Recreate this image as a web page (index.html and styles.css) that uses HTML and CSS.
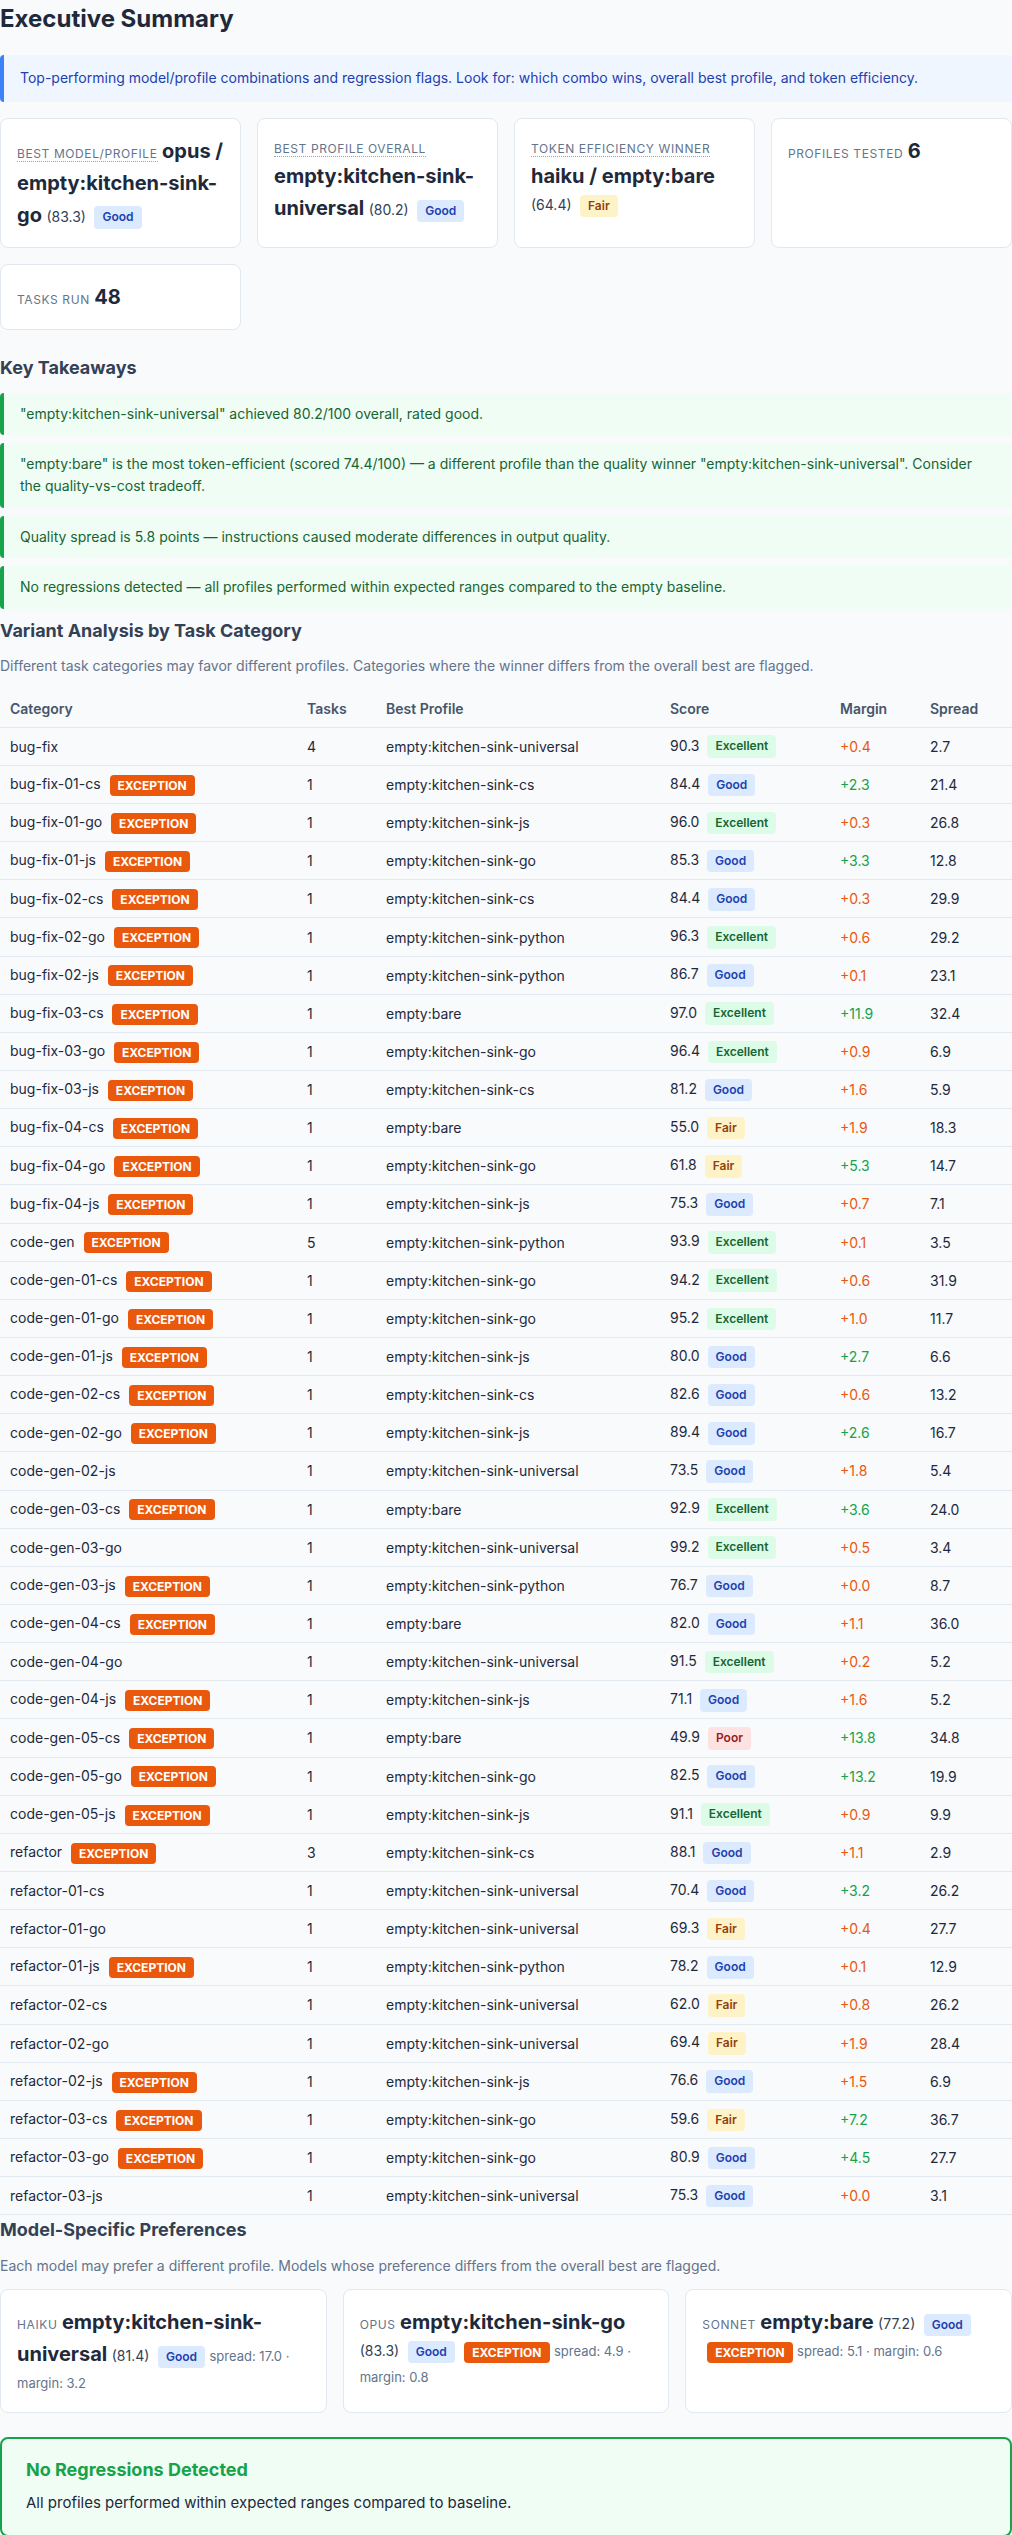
FILE: index.html
```html
<!DOCTYPE html>
<html lang="en">
<head>
<meta charset="utf-8">
<title>Executive Summary</title>
<link rel="stylesheet" href="styles.css">
</head>
<body>
<main class="page">
  <h2 class="page-title">Executive Summary</h2>
  <div class="callout">Top-performing model/profile combinations and regression flags. Look for: which combo wins, overall best profile, and token efficiency.</div>

  <div class="stat-grid">
    <div class="stat-card"><span class="stat-label tip">Best model/profile</span> <span class="stat-value">opus / empty:kitchen-sink-go</span> <span class="stat-score">(83.3)</span> <span class="badge good">Good</span></div>
    <div class="stat-card"><span class="stat-label tip">Best profile overall</span> <span class="stat-value">empty:kitchen-sink-universal</span> <span class="stat-score">(80.2)</span> <span class="badge good">Good</span></div>
    <div class="stat-card"><span class="stat-label tip">Token efficiency winner</span> <span class="stat-value">haiku / empty:bare</span> <span class="stat-score">(64.4)</span> <span class="badge fair">Fair</span></div>
    <div class="stat-card"><span class="stat-label">Profiles tested</span> <span class="stat-value">6</span></div>
    <div class="stat-card"><span class="stat-label">Tasks run</span> <span class="stat-value">48</span></div>
  </div>

  <h3 class="section-title">Key Takeaways</h3>
  <ul class="takeaways">
    <li>"empty:kitchen-sink-universal" achieved 80.2/100 overall, rated good.</li>
    <li>"empty:bare" is the most token-efficient (scored 74.4/100) — a different profile than the quality winner "empty:kitchen-sink-universal". Consider the quality-vs-cost tradeoff.</li>
    <li>Quality spread is 5.8 points — instructions caused moderate differences in output quality.</li>
    <li>No regressions detected — all profiles performed within expected ranges compared to the empty baseline.</li>
  </ul>

  <h3 class="section-title">Variant Analysis by Task Category</h3>
  <p class="section-desc">Different task categories may favor different profiles. Categories where the winner differs from the overall best are flagged.</p>

  <table class="variant-table">
    <colgroup>
      <col class="c-cat"><col class="c-tasks"><col class="c-prof"><col class="c-score"><col class="c-margin"><col class="c-spread">
    </colgroup>
    <thead>
      <tr><th>Category</th><th>Tasks</th><th>Best Profile</th><th>Score</th><th>Margin</th><th>Spread</th></tr>
    </thead>
    <tbody>
      <tr><td>bug-fix</td><td>4</td><td>empty:kitchen-sink-universal</td><td>90.3 <span class="badge excellent">Excellent</span></td><td class="m-low">+0.4</td><td>2.7</td></tr>
      <tr><td>bug-fix-01-cs <span class="badge exc">EXCEPTION</span></td><td>1</td><td>empty:kitchen-sink-cs</td><td>84.4 <span class="badge good">Good</span></td><td class="m-high">+2.3</td><td>21.4</td></tr>
      <tr><td>bug-fix-01-go <span class="badge exc">EXCEPTION</span></td><td>1</td><td>empty:kitchen-sink-js</td><td>96.0 <span class="badge excellent">Excellent</span></td><td class="m-low">+0.3</td><td>26.8</td></tr>
      <tr><td>bug-fix-01-js <span class="badge exc">EXCEPTION</span></td><td>1</td><td>empty:kitchen-sink-go</td><td>85.3 <span class="badge good">Good</span></td><td class="m-high">+3.3</td><td>12.8</td></tr>
      <tr><td>bug-fix-02-cs <span class="badge exc">EXCEPTION</span></td><td>1</td><td>empty:kitchen-sink-cs</td><td>84.4 <span class="badge good">Good</span></td><td class="m-low">+0.3</td><td>29.9</td></tr>
      <tr><td>bug-fix-02-go <span class="badge exc">EXCEPTION</span></td><td>1</td><td>empty:kitchen-sink-python</td><td>96.3 <span class="badge excellent">Excellent</span></td><td class="m-low">+0.6</td><td>29.2</td></tr>
      <tr><td>bug-fix-02-js <span class="badge exc">EXCEPTION</span></td><td>1</td><td>empty:kitchen-sink-python</td><td>86.7 <span class="badge good">Good</span></td><td class="m-low">+0.1</td><td>23.1</td></tr>
      <tr><td>bug-fix-03-cs <span class="badge exc">EXCEPTION</span></td><td>1</td><td>empty:bare</td><td>97.0 <span class="badge excellent">Excellent</span></td><td class="m-high">+11.9</td><td>32.4</td></tr>
      <tr><td>bug-fix-03-go <span class="badge exc">EXCEPTION</span></td><td>1</td><td>empty:kitchen-sink-go</td><td>96.4 <span class="badge excellent">Excellent</span></td><td class="m-low">+0.9</td><td>6.9</td></tr>
      <tr><td>bug-fix-03-js <span class="badge exc">EXCEPTION</span></td><td>1</td><td>empty:kitchen-sink-cs</td><td>81.2 <span class="badge good">Good</span></td><td class="m-low">+1.6</td><td>5.9</td></tr>
      <tr><td>bug-fix-04-cs <span class="badge exc">EXCEPTION</span></td><td>1</td><td>empty:bare</td><td>55.0 <span class="badge fair">Fair</span></td><td class="m-low">+1.9</td><td>18.3</td></tr>
      <tr><td>bug-fix-04-go <span class="badge exc">EXCEPTION</span></td><td>1</td><td>empty:kitchen-sink-go</td><td>61.8 <span class="badge fair">Fair</span></td><td class="m-high">+5.3</td><td>14.7</td></tr>
      <tr><td>bug-fix-04-js <span class="badge exc">EXCEPTION</span></td><td>1</td><td>empty:kitchen-sink-js</td><td>75.3 <span class="badge good">Good</span></td><td class="m-low">+0.7</td><td>7.1</td></tr>
      <tr><td>code-gen <span class="badge exc">EXCEPTION</span></td><td>5</td><td>empty:kitchen-sink-python</td><td>93.9 <span class="badge excellent">Excellent</span></td><td class="m-low">+0.1</td><td>3.5</td></tr>
      <tr><td>code-gen-01-cs <span class="badge exc">EXCEPTION</span></td><td>1</td><td>empty:kitchen-sink-go</td><td>94.2 <span class="badge excellent">Excellent</span></td><td class="m-low">+0.6</td><td>31.9</td></tr>
      <tr><td>code-gen-01-go <span class="badge exc">EXCEPTION</span></td><td>1</td><td>empty:kitchen-sink-go</td><td>95.2 <span class="badge excellent">Excellent</span></td><td class="m-low">+1.0</td><td>11.7</td></tr>
      <tr><td>code-gen-01-js <span class="badge exc">EXCEPTION</span></td><td>1</td><td>empty:kitchen-sink-js</td><td>80.0 <span class="badge good">Good</span></td><td class="m-high">+2.7</td><td>6.6</td></tr>
      <tr><td>code-gen-02-cs <span class="badge exc">EXCEPTION</span></td><td>1</td><td>empty:kitchen-sink-cs</td><td>82.6 <span class="badge good">Good</span></td><td class="m-low">+0.6</td><td>13.2</td></tr>
      <tr><td>code-gen-02-go <span class="badge exc">EXCEPTION</span></td><td>1</td><td>empty:kitchen-sink-js</td><td>89.4 <span class="badge good">Good</span></td><td class="m-high">+2.6</td><td>16.7</td></tr>
      <tr><td>code-gen-02-js</td><td>1</td><td>empty:kitchen-sink-universal</td><td>73.5 <span class="badge good">Good</span></td><td class="m-low">+1.8</td><td>5.4</td></tr>
      <tr><td>code-gen-03-cs <span class="badge exc">EXCEPTION</span></td><td>1</td><td>empty:bare</td><td>92.9 <span class="badge excellent">Excellent</span></td><td class="m-high">+3.6</td><td>24.0</td></tr>
      <tr><td>code-gen-03-go</td><td>1</td><td>empty:kitchen-sink-universal</td><td>99.2 <span class="badge excellent">Excellent</span></td><td class="m-low">+0.5</td><td>3.4</td></tr>
      <tr><td>code-gen-03-js <span class="badge exc">EXCEPTION</span></td><td>1</td><td>empty:kitchen-sink-python</td><td>76.7 <span class="badge good">Good</span></td><td class="m-low">+0.0</td><td>8.7</td></tr>
      <tr><td>code-gen-04-cs <span class="badge exc">EXCEPTION</span></td><td>1</td><td>empty:bare</td><td>82.0 <span class="badge good">Good</span></td><td class="m-low">+1.1</td><td>36.0</td></tr>
      <tr><td>code-gen-04-go</td><td>1</td><td>empty:kitchen-sink-universal</td><td>91.5 <span class="badge excellent">Excellent</span></td><td class="m-low">+0.2</td><td>5.2</td></tr>
      <tr><td>code-gen-04-js <span class="badge exc">EXCEPTION</span></td><td>1</td><td>empty:kitchen-sink-js</td><td>71.1 <span class="badge good">Good</span></td><td class="m-low">+1.6</td><td>5.2</td></tr>
      <tr><td>code-gen-05-cs <span class="badge exc">EXCEPTION</span></td><td>1</td><td>empty:bare</td><td>49.9 <span class="badge poor">Poor</span></td><td class="m-high">+13.8</td><td>34.8</td></tr>
      <tr><td>code-gen-05-go <span class="badge exc">EXCEPTION</span></td><td>1</td><td>empty:kitchen-sink-go</td><td>82.5 <span class="badge good">Good</span></td><td class="m-high">+13.2</td><td>19.9</td></tr>
      <tr><td>code-gen-05-js <span class="badge exc">EXCEPTION</span></td><td>1</td><td>empty:kitchen-sink-js</td><td>91.1 <span class="badge excellent">Excellent</span></td><td class="m-low">+0.9</td><td>9.9</td></tr>
      <tr><td>refactor <span class="badge exc">EXCEPTION</span></td><td>3</td><td>empty:kitchen-sink-cs</td><td>88.1 <span class="badge good">Good</span></td><td class="m-low">+1.1</td><td>2.9</td></tr>
      <tr><td>refactor-01-cs</td><td>1</td><td>empty:kitchen-sink-universal</td><td>70.4 <span class="badge good">Good</span></td><td class="m-high">+3.2</td><td>26.2</td></tr>
      <tr><td>refactor-01-go</td><td>1</td><td>empty:kitchen-sink-universal</td><td>69.3 <span class="badge fair">Fair</span></td><td class="m-low">+0.4</td><td>27.7</td></tr>
      <tr><td>refactor-01-js <span class="badge exc">EXCEPTION</span></td><td>1</td><td>empty:kitchen-sink-python</td><td>78.2 <span class="badge good">Good</span></td><td class="m-low">+0.1</td><td>12.9</td></tr>
      <tr><td>refactor-02-cs</td><td>1</td><td>empty:kitchen-sink-universal</td><td>62.0 <span class="badge fair">Fair</span></td><td class="m-low">+0.8</td><td>26.2</td></tr>
      <tr><td>refactor-02-go</td><td>1</td><td>empty:kitchen-sink-universal</td><td>69.4 <span class="badge fair">Fair</span></td><td class="m-low">+1.9</td><td>28.4</td></tr>
      <tr><td>refactor-02-js <span class="badge exc">EXCEPTION</span></td><td>1</td><td>empty:kitchen-sink-js</td><td>76.6 <span class="badge good">Good</span></td><td class="m-low">+1.5</td><td>6.9</td></tr>
      <tr><td>refactor-03-cs <span class="badge exc">EXCEPTION</span></td><td>1</td><td>empty:kitchen-sink-go</td><td>59.6 <span class="badge fair">Fair</span></td><td class="m-high">+7.2</td><td>36.7</td></tr>
      <tr><td>refactor-03-go <span class="badge exc">EXCEPTION</span></td><td>1</td><td>empty:kitchen-sink-go</td><td>80.9 <span class="badge good">Good</span></td><td class="m-high">+4.5</td><td>27.7</td></tr>
      <tr><td>refactor-03-js</td><td>1</td><td>empty:kitchen-sink-universal</td><td>75.3 <span class="badge good">Good</span></td><td class="m-low">+0.0</td><td>3.1</td></tr>
    </tbody>
  </table>

  <h3 class="section-title">Model-Specific Preferences</h3>
  <p class="section-desc">Each model may prefer a different profile. Models whose preference differs from the overall best are flagged.</p>

  <div class="pref-grid">
    <div class="pref-card"><span class="pref-model">haiku</span> <span class="stat-value">empty:kitchen-sink-universal</span> <span class="stat-score">(81.4)</span> <span class="badge good">Good</span> <span class="pref-meta">spread: 17.0 · margin: 3.2</span></div>
    <div class="pref-card"><span class="pref-model">opus</span> <span class="stat-value">empty:kitchen-sink-go</span> <span class="stat-score">(83.3)</span> <span class="badge good">Good</span> <span class="badge exc">EXCEPTION</span> <span class="pref-meta">spread: 4.9 · margin: 0.8</span></div>
    <div class="pref-card"><span class="pref-model">sonnet</span> <span class="stat-value">empty:bare</span> <span class="stat-score">(77.2)</span> <span class="badge good">Good</span> <span class="badge exc">EXCEPTION</span> <span class="pref-meta">spread: 5.1 · margin: 0.6</span></div>
  </div>

  <div class="regress-box">
    <h3 class="regress-title">No Regressions Detected</h3>
    <p class="regress-text">All profiles performed within expected ranges compared to baseline.</p>
  </div>
</main>
</body>
</html>
```

FILE: styles.css
```css
* { box-sizing: border-box; }

html, body {
  margin: 0;
  padding: 0;
  background: #f8fafc;
}

body {
  font-family: Inter, "Noto Sans", "Liberation Sans", sans-serif;
  font-size: 14px;
  line-height: 1.6;
  color: #1e293b;
}

.page {
  width: 1012px;
}

.page-title {
  margin: 0 0 17px;
  font-size: 24px;
  line-height: 38.4px;
  font-weight: 700;
  color: #1e293b;
}

.callout {
  background: #eff6ff;
  border-left: 4px solid #3b82f6;
  border-radius: 4px;
  padding: 12px 16px;
  color: #1e40af;
  margin-bottom: 16px;
}

/* Stat cards */
.stat-grid {
  display: grid;
  grid-template-columns: repeat(4, 1fr);
  gap: 16px;
  margin-bottom: 24px;
}

.stat-card {
  background: #fff;
  border: 1px solid #e2e8f0;
  border-radius: 8px;
  padding: 16px;
  font-size: 16px;
  line-height: 1.6;
}

.stat-label {
  font-size: 12px;
  text-transform: uppercase;
  letter-spacing: 0.05em;
  color: #64748b;
}

.stat-label.tip {
  border-bottom: 1px dotted #94a3b8;
  cursor: help;
}

.stat-value {
  font-size: 20px;
  font-weight: 700;
  color: #1e293b;
}

.stat-score {
  font-size: 14px;
  color: #334155;
}

/* Badges */
.badge {
  display: inline-block;
  font-size: 12px;
  font-weight: 600;
  line-height: 18.6px;
  padding: 2px 8px;
  border-radius: 4px;
  margin-left: 4px;
  vertical-align: middle;
}

.badge.excellent { background: #dcfce7; color: #166534; }
.badge.good { background: #dbeafe; color: #1e40af; }
.badge.fair { background: #fef3c7; color: #92400e; }
.badge.poor { background: #fee2e2; color: #991b1b; }

.badge.exc {
  background: #ea580c;
  color: #fff;
  font-weight: 700;
  line-height: 17px;
  margin-left: 5px;
}

/* Sections */
.section-title {
  margin: 0 0 10px;
  font-size: 18px;
  line-height: 28.8px;
  font-weight: 700;
  color: #334155;
}

.section-desc {
  margin: 0 0 12px;
  color: #64748b;
}

.takeaways {
  list-style: none;
  margin: 0;
  padding: 0;
}

.takeaways li {
  background: #f0fdf4;
  border-left: 4px solid #16a34a;
  border-radius: 4px;
  padding: 10px 16px;
  margin-bottom: 8px;
  color: #166534;
}

/* Table */
.variant-table {
  width: 100%;
  table-layout: fixed;
  border-collapse: separate;
  border-spacing: 0;
  margin-bottom: 1px;
}

.c-cat { width: 297px; }
.c-tasks { width: 79px; }
.c-prof { width: 284px; }
.c-score { width: 170px; }
.c-margin { width: 90px; }
.c-spread { width: 92px; }

.variant-table th {
  text-align: left;
  font-weight: 600;
  color: #475569;
  padding: 8px 10px;
  line-height: 21px;
  border-bottom: 1px solid #e2e8f0;
}

.variant-table td {
  padding: 0 10px;
  height: 38.15px;
  line-height: 21px;
  border-bottom: 1px solid #e2e8f0;
  vertical-align: middle;
  white-space: nowrap;
}

.m-low { color: #ea580c; }
.m-high { color: #16a34a; }

/* Model preference cards */
.pref-grid {
  display: grid;
  grid-template-columns: repeat(3, 1fr);
  gap: 16px;
  margin-bottom: 24px;
}

.pref-card {
  background: #fff;
  border: 1px solid #e2e8f0;
  border-radius: 8px;
  padding: 16px;
  font-size: 16px;
  line-height: 1.6;
}

.pref-model {
  font-size: 12px;
  text-transform: uppercase;
  letter-spacing: 0.05em;
  color: #64748b;
}

.pref-meta {
  font-size: 13px;
  color: #64748b;
}

/* Regression box */
.regress-box {
  background: #f0fdf4;
  border: 2px solid #16a34a;
  border-radius: 8px;
  padding: 20px 24px;
}

.regress-title {
  margin: 0 0 10px;
  font-size: 18px;
  line-height: 21.6px;
  font-weight: 700;
  color: #16a34a;
}

.regress-text {
  margin: 0;
  font-size: 15px;
  line-height: 24px;
  color: #1e293b;
}
```
